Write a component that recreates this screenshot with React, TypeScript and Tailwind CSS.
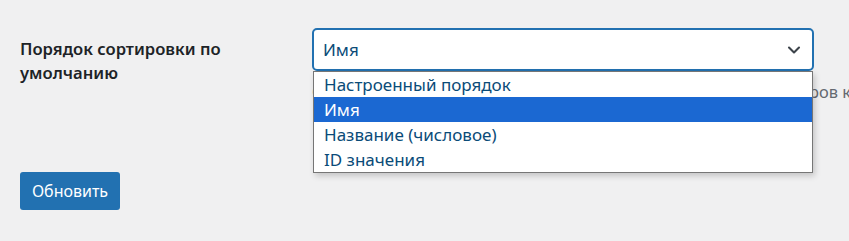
import { ChevronDown } from 'lucide-react'

const options = ['Настроенный порядок', 'Имя', 'Название (числовое)', 'ID значения']

export default function App() {
  const selected = 1

  return (
    <div className="min-h-screen overflow-hidden bg-[#f0f0f1] font-['Noto_Sans',sans-serif] text-[#1d2327]">
      <div className="pl-5 pt-7">
        <div className="flex">
          <div className="w-[292px] shrink-0 pt-[9px] pr-10 text-[16.6px] font-semibold leading-6">
            Порядок сортировки по умолчанию
          </div>

          <div className="relative w-[502px] shrink-0">
            <div className="flex h-[43px] items-center justify-between rounded-[5px] border-2 border-[#2271b1] bg-white pl-[9px] pr-[8px] text-[17px] text-[#0a4b78]">
              <span>Имя</span>
              <ChevronDown className="h-[20px] w-[20px] text-[#3c434a]" strokeWidth={2.5} />
            </div>

            <p className="mt-[9px] whitespace-nowrap text-[16.4px] leading-6 text-[#646970]">
              Определяет порядок сортировки терминов на страницах товаров категорий магазина
            </p>

            <ul className="absolute left-[1px] top-[43px] w-[500px] border border-[#767676] bg-white text-[17px] text-[#0a4b78] shadow-[2px_3px_6px_rgba(0,0,0,0.18)]">
              {options.map((o, i) => (
                <li
                  key={o}
                  className={
                    i === selected
                      ? 'h-[25px] bg-[#1b68d2] pl-[10px] leading-[25px] text-white'
                      : 'h-[25px] pl-[10px] leading-[25px]'
                  }
                >
                  {o}
                </li>
              ))}
            </ul>
          </div>
        </div>

        <button className="mt-[68px] h-[38px] w-[100px] rounded-[3px] bg-[#2271b1] text-[16px] text-white">
          Обновить
        </button>
      </div>
    </div>
  )
}
